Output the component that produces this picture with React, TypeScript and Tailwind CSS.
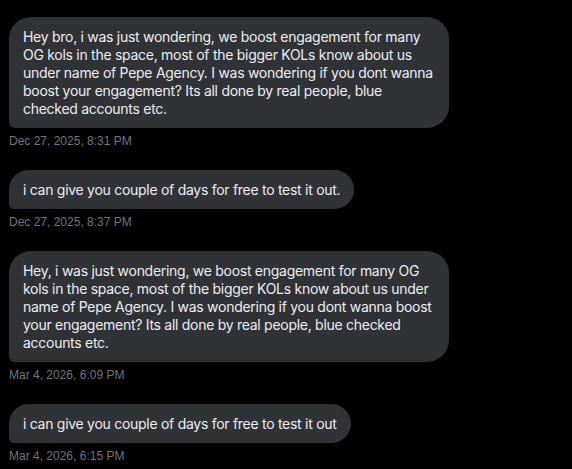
const messages = [
  {
    text: "Hey bro, i was just wondering, we boost engagement for many OG kols in the space, most of the bigger KOLs know about us under name of Pepe Agency. I was wondering if you dont wanna boost your engagement? Its all done by real people, blue checked accounts etc.",
    time: "Dec 27, 2025, 8:31 PM",
  },
  {
    text: "i can give you couple of days for free to test it out.",
    time: "Dec 27, 2025, 8:37 PM",
  },
  {
    text: "Hey, i was just wondering, we boost engagement for many OG kols in the space, most of the bigger KOLs know about us under name of Pepe Agency. I was wondering if you dont wanna boost your engagement? Its all done by real people, blue checked accounts etc.",
    time: "Mar 4, 2026, 6:09 PM",
  },
  {
    text: "i can give you couple of days for free to test it out",
    time: "Mar 4, 2026, 6:15 PM",
  },
];

function MessageBubble({ text, time }: { text: string; time: string }) {
  return (
    <div className="flex flex-col items-start">
      <div className="max-w-[440px] rounded-[22px] rounded-bl-[6px] bg-[#2f3336] px-[14px] pt-[11px] pb-[10px] text-[14px] leading-[18px] tracking-[-0.28px] text-[#eceeef] [font-family:Inter,'Noto_Sans',sans-serif]">
        {text}
      </div>
      <span className="mt-[5px] text-[12px] leading-4 text-[#71767b] [font-family:'Liberation_Sans',Arial,sans-serif]">
        {time}
      </span>
    </div>
  );
}

export default function App() {
  return (
    <div className="min-h-[469px] w-[572px] bg-black px-[9px] pt-[17px]">
      <div className="flex flex-col gap-[21px]">
        {messages.map((m) => (
          <MessageBubble key={m.time} text={m.text} time={m.time} />
        ))}
      </div>
    </div>
  );
}
